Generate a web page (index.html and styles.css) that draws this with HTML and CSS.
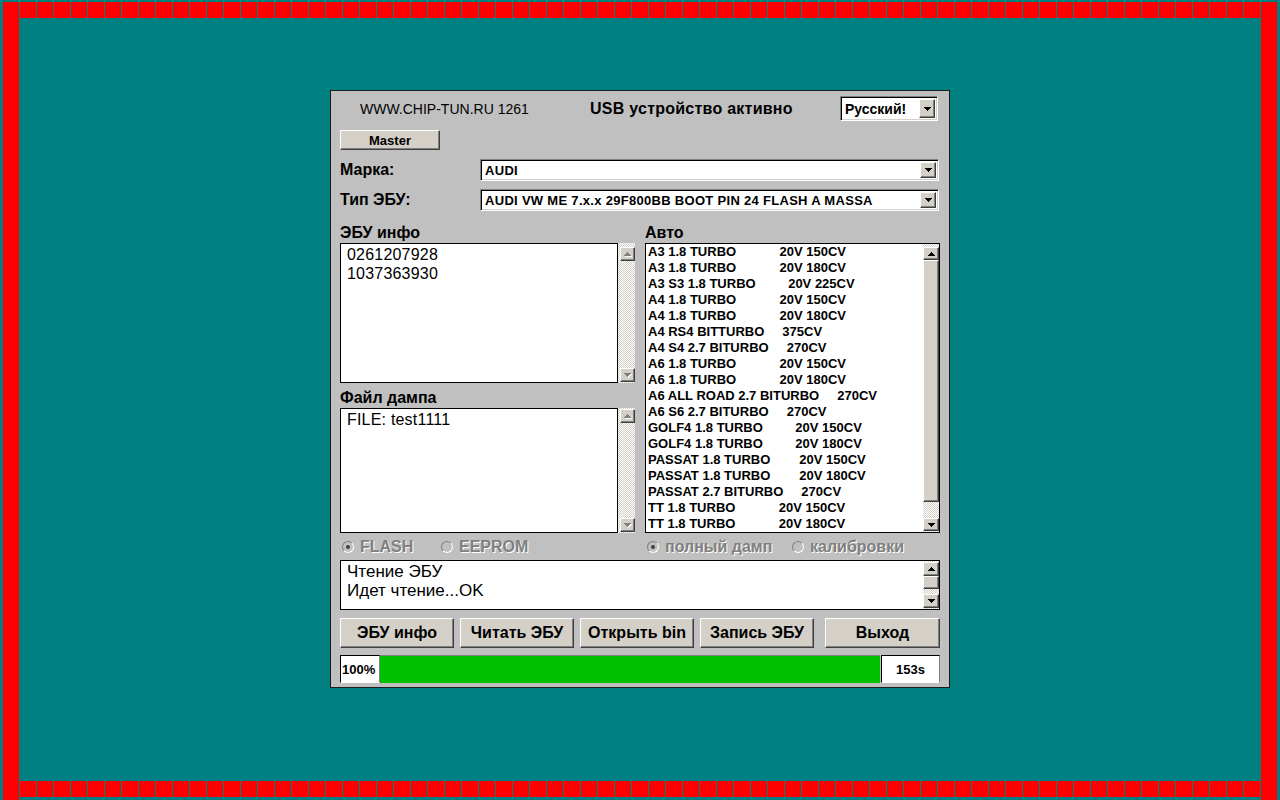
FILE: index.html
```html
<!DOCTYPE html>
<html lang="ru">
<head>
<meta charset="utf-8">
<title>CHIP-TUN</title>
<link rel="stylesheet" href="styles.css">
</head>
<body>
<div class="screen">
  <div class="vbar"></div>
  <div class="mid">
    <div class="strip"></div>
    <div class="desk">
      <div class="win">
        <div class="head">
          <span class="brand">WWW.CHIP-TUN.RU 1261</span>
          <span class="status">USB устройство активно</span>
          <div class="combo lang">
            <span class="val">Русский!</span>
            <span class="dd"><svg width="7" height="4" viewBox="0 0 7 4"><path d="M0 0h7v1H0zM1 1h5v1H1zM2 2h3v1H2zM3 3h1v1H3z"/></svg></span>
          </div>
        </div>
        <div class="btn master">Master</div>
        <div class="field">
          <span class="lbl">Марка:</span>
          <div class="combo wide">
            <span class="val">AUDI</span>
            <span class="dd"><svg width="7" height="4" viewBox="0 0 7 4"><path d="M0 0h7v1H0zM1 1h5v1H1zM2 2h3v1H2zM3 3h1v1H3z"/></svg></span>
          </div>
        </div>
        <div class="field f2">
          <span class="lbl">Тип ЭБУ:</span>
          <div class="combo wide">
            <span class="val">AUDI VW ME 7.x.x 29F800BB BOOT PIN 24 FLASH A MASSA</span>
            <span class="dd"><svg width="7" height="4" viewBox="0 0 7 4"><path d="M0 0h7v1H0zM1 1h5v1H1zM2 2h3v1H2zM3 3h1v1H3z"/></svg></span>
          </div>
        </div>
        <div class="cols">
          <div class="col">
            <div class="cap">ЭБУ инфо</div>
            <div class="memo info">
              <div class="txt">0261207928<br>1037363930</div>
              <div class="sb">
                <span class="sbtn"><svg width="8" height="5" viewBox="0 0 8 5"><path fill="#fff" d="M4 1h1v1H4zM3 2h3v1H3zM2 3h5v1H2zM1 4h7v1H1z"/><path fill="#808080" d="M3 0h1v1H3zM2 1h3v1H2zM1 2h5v1H1zM0 3h7v1H0z"/></svg></span>
                <span class="sbtn"><svg width="8" height="5" viewBox="0 0 8 5"><path fill="#fff" d="M1 1h7v1H1zM2 2h5v1H2zM3 3h3v1H3zM4 4h1v1H4z"/><path fill="#808080" d="M0 0h7v1H0zM1 1h5v1H1zM2 2h3v1H2zM3 3h1v1H3z"/></svg></span>
              </div>
            </div>
            <div class="cap cap2">Файл дампа</div>
            <div class="memo file">
              <div class="txt">FILE: test1111</div>
              <div class="sb">
                <span class="sbtn"><svg width="8" height="5" viewBox="0 0 8 5"><path fill="#fff" d="M4 1h1v1H4zM3 2h3v1H3zM2 3h5v1H2zM1 4h7v1H1z"/><path fill="#808080" d="M3 0h1v1H3zM2 1h3v1H2zM1 2h5v1H1zM0 3h7v1H0z"/></svg></span>
                <span class="sbtn"><svg width="8" height="5" viewBox="0 0 8 5"><path fill="#fff" d="M1 1h7v1H1zM2 2h5v1H2zM3 3h3v1H3zM4 4h1v1H4z"/><path fill="#808080" d="M0 0h7v1H0zM1 1h5v1H1zM2 2h3v1H2zM3 3h1v1H3z"/></svg></span>
              </div>
            </div>
            <div class="radios">
              <span class="radio r-first"><span class="rb on"></span>FLASH</span>
              <span class="radio"><span class="rb"></span>EEPROM</span>
            </div>
          </div>
          <div class="col">
            <div class="cap">Авто</div>
            <div class="list">
              <div class="rows"><div>A3 1.8 TURBO            20V 150CV</div><div>A3 1.8 TURBO            20V 180CV</div><div>A3 S3 1.8 TURBO         20V 225CV</div><div>A4 1.8 TURBO            20V 150CV</div><div>A4 1.8 TURBO            20V 180CV</div><div>A4 RS4 BITTURBO     375CV</div><div>A4 S4 2.7 BITURBO     270CV</div><div>A6 1.8 TURBO            20V 150CV</div><div>A6 1.8 TURBO            20V 180CV</div><div>A6 ALL ROAD 2.7 BITURBO     270CV</div><div>A6 S6 2.7 BITURBO     270CV</div><div>GOLF4 1.8 TURBO         20V 150CV</div><div>GOLF4 1.8 TURBO         20V 180CV</div><div>PASSAT 1.8 TURBO        20V 150CV</div><div>PASSAT 1.8 TURBO        20V 180CV</div><div>PASSAT 2.7 BITURBO     270CV</div><div>TT 1.8 TURBO            20V 150CV</div><div>TT 1.8 TURBO            20V 180CV</div></div>
              <div class="sb lsb">
                <span class="sbtn"><svg width="7" height="4" viewBox="0 0 7 4"><path d="M3 0h1v1H3zM2 1h3v1H2zM1 2h5v1H1zM0 3h7v1H0z"/></svg></span>
                <span class="thumb"></span>
                <span class="track"></span>
                <span class="sbtn"><svg width="7" height="4" viewBox="0 0 7 4"><path d="M0 0h7v1H0zM1 1h5v1H1zM2 2h3v1H2zM3 3h1v1H3z"/></svg></span>
              </div>
            </div>
            <div class="radios">
              <span class="radio r-full"><span class="rb on"></span>полный дамп</span>
              <span class="radio"><span class="rb"></span>калибровки</span>
            </div>
          </div>
        </div>
        <div class="log">
          <div class="txt">Чтение ЭБУ<br>Идет чтение...OK</div>
          <div class="sb gsb">
            <span class="sbtn"><svg width="7" height="4" viewBox="0 0 7 4"><path d="M3 0h1v1H3zM2 1h3v1H2zM1 2h5v1H1zM0 3h7v1H0z"/></svg></span>
            <span class="thumb"></span>
            <span class="track"></span>
            <span class="sbtn"><svg width="7" height="4" viewBox="0 0 7 4"><path d="M0 0h7v1H0zM1 1h5v1H1zM2 2h3v1H2zM3 3h1v1H3z"/></svg></span>
          </div>
        </div>
        <div class="btns">
          <div class="btn">ЭБУ инфо</div>
          <div class="btn">Читать ЭБУ</div>
          <div class="btn">Открыть bin</div>
          <div class="btn">Запись ЭБУ</div>
          <div class="btn exit">Выход</div>
        </div>
        <div class="prog">
          <div class="pct">100%</div>
          <div class="bar"></div>
          <div class="time">153s</div>
        </div>
      </div>
    </div>
    <div class="strip"></div>
  </div>
  <div class="vbar"></div>
</div>
</body>
</html>
```

FILE: styles.css
```css
* { box-sizing: border-box; }

body {
  margin: 0;
  background: #008080;
  font-family: "Liberation Sans", Arial, sans-serif;
  font-weight: bold;
  color: #000;
}

.screen {
  display: flex;
  width: 1280px;
  height: 800px;
  padding: 2px 3px 0;
}

.vbar {
  flex: none;
  width: 16px;
  background: #ff0000;
}

.mid {
  flex: 1;
  display: flex;
  flex-direction: column;
  padding-bottom: 3px;
}

.strip {
  flex: none;
  height: 16px;
  margin: 0 1px;
  background: repeating-linear-gradient(90deg, #ff0000 0 16px, #008080 16px 17px);
}

.desk {
  flex: 1;
  display: flex;
  justify-content: center;
  align-items: flex-start;
  padding-top: 72px;
}

.win {
  width: 620px;
  border: 1px solid #1c1c1c;
  background: #c0c0c0;
  padding: 5px 9px 4px;
  display: flex;
  flex-direction: column;
}

/* header */
.head {
  height: 25px;
  display: flex;
  align-items: center;
}

.brand {
  width: 230px;
  margin-left: 20px;
  font-size: 14px;
  font-weight: normal;
}

.status {
  flex: 1;
  font-size: 16px;
  letter-spacing: 0.25px;
}

/* combo boxes */
.combo {
  display: flex;
  align-items: stretch;
  background: #fff;
  border: 1px solid;
  border-color: #808080 #fff #fff #808080;
  box-shadow: inset 1px 1px #000, inset -1px -1px #d4d0c8;
  padding: 2px;
}

.combo .val {
  flex: 1;
  display: flex;
  align-items: center;
  padding-left: 2px;
  font-size: 13px;
  letter-spacing: 0.3px;
  white-space: nowrap;
}

.combo .dd {
  width: 16px;
  background: #d4d0c8;
  border: 1px solid;
  border-color: #fff #404040 #404040 #fff;
  box-shadow: inset -1px -1px #808080;
  display: flex;
  align-items: center;
  justify-content: center;
}

.combo.lang {
  width: 98px;
  height: 25px;
  margin-right: 2px;
}

.combo.lang .val { font-size: 14px; letter-spacing: 0; }

.combo.wide {
  width: 459px;
  height: 22px;
}

/* buttons */
.btn {
  display: flex;
  align-items: center;
  justify-content: center;
  background: #d4d0c8;
  border: 1px solid;
  border-color: #fff #404040 #404040 #fff;
  box-shadow: inset -1px -1px #808080;
  white-space: nowrap;
}

.master {
  width: 100px;
  height: 20px;
  margin-top: 9px;
  font-size: 13px;
}

/* label rows */
.field {
  display: flex;
  align-items: center;
  margin-top: 9px;
}

.field.f2 { margin-top: 8px; }

.lbl {
  width: 140px;
  font-size: 16px;
}

/* columns */
.cols {
  display: flex;
  gap: 10px;
  margin-top: 12px;
}

.col {
  width: 295px;
  display: flex;
  flex-direction: column;
}

.cap {
  height: 20px;
  line-height: 20px;
  font-size: 16px;
}

.cap2 {
  margin-top: 4px;
  height: 21px;
  line-height: 21px;
}

.memo {
  display: flex;
}

.memo.info { height: 140px; }
.memo.file { height: 125px; }

.memo .txt,
.log .txt {
  flex: 1;
  background: #fff;
  padding: 1px 6px;
  font-size: 16px;
  font-weight: normal;
  line-height: 19px;
}

.memo .txt {
  border: 1px solid #000;
  letter-spacing: 0.2px;
}

/* scrollbars */
.sb {
  flex: none;
  width: 17px;
  display: flex;
  flex-direction: column;
  justify-content: space-between;
  padding: 1px 0 1px 2px;
  background-color: #fff;
  background-image: conic-gradient(#d4d0c8 25%, #fff 0 50%, #d4d0c8 0 75%, #fff 0);
  background-size: 2px 2px;
}

.memo.info .sb { padding-top: 4px; }

.sbtn {
  flex: none;
  width: 15px;
  height: 14px;
  display: flex;
  align-items: center;
  justify-content: center;
  background: #d4d0c8;
  border: 1px solid;
  border-color: #fff #404040 #404040 #fff;
  box-shadow: inset -1px -1px #808080;
}

.sbtn svg { display: block; }

.thumb {
  flex: none;
  background: #d4d0c8;
  border: 1px solid;
  border-color: #fff #404040 #404040 #fff;
  box-shadow: inset -1px -1px #808080;
}

.track { flex: 1; }

.lsb {
  width: 16px;
  padding: 3px 0 1px;
  justify-content: flex-start;
}

.lsb .sbtn { width: 16px; height: 13px; }
.lsb .thumb { height: 242px; }

.gsb {
  width: 16px;
  padding: 1px 0;
  justify-content: flex-start;
}

.gsb .sbtn { width: 16px; height: 14px; }
.gsb .thumb { height: 13px; }

/* list */
.list {
  height: 290px;
  display: flex;
  border: 1px solid #000;
  background: #fff;
}

.rows {
  flex: 1;
  padding-left: 2px;
  font-size: 13px;
  line-height: 16px;
  white-space: pre;
  overflow: hidden;
}

/* radios */
.radios {
  height: 27px;
  display: flex;
  align-items: center;
  padding-left: 2px;
  font-size: 16px;
  color: #808080;
  text-shadow: 1px 1px #fff;
}

.radio {
  display: flex;
  align-items: center;
  gap: 6px;
}

.r-first { width: 99px; }
.r-full { width: 145px; }

.rb {
  width: 12px;
  height: 12px;
  border-radius: 50%;
  border: 1px solid;
  border-color: #808080 #fff #fff #808080;
  background: #c0c0c0;
  display: flex;
  align-items: center;
  justify-content: center;
}

.rb.on::after {
  content: "";
  width: 4px;
  height: 4px;
  border-radius: 50%;
  background: #404040;
}

/* log */
.log {
  height: 50px;
  display: flex;
  border: 1px solid #000;
  background: #fff;
}

.log .txt {
  font-size: 17px;
}

/* bottom buttons */
.btns {
  display: flex;
  gap: 6px;
  margin-top: 8px;
}

.btns .btn {
  width: 114px;
  height: 30px;
  font-size: 16px;
}

.btns .exit {
  margin-left: auto;
  width: 115px;
}

/* progress */
.prog {
  display: flex;
  height: 28px;
  margin-top: 7px;
}

.pct,
.time {
  background: #fff;
  border: 1px solid;
  border-color: #000 #808080 #fff #000;
  display: flex;
  align-items: center;
  font-size: 13px;
}

.pct {
  width: 40px;
  padding-left: 1px;
}

.bar {
  flex: 1;
  background: #00c000;
  border-top: 1px solid #808080;
}

.time {
  width: 59px;
  margin-left: 1px;
  justify-content: center;
}
```
